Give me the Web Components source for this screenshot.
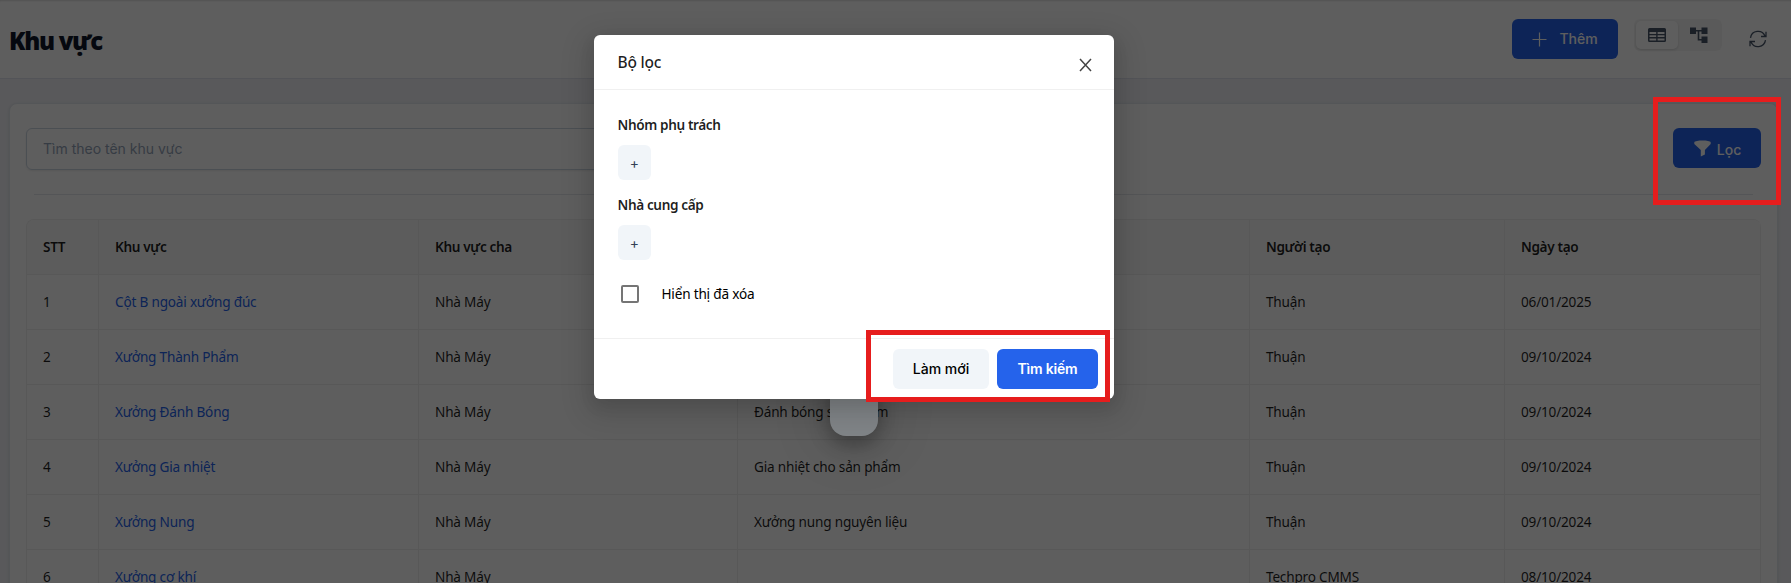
<!DOCTYPE html>
<html lang="vi">
<head>
<meta charset="utf-8">
<title>Khu vực</title>
<style>
html,body{margin:0;height:583px;overflow:hidden}
body{position:relative;font:13.6px/22px "Noto Sans","Open Sans",sans-serif;color:rgba(0,0,0,.88);background:#f0f1f6}
</style>
</head>
<body>
<region-page></region-page>
<page-mask></page-mask>
<filter-dialog></filter-dialog>
<mark-box style="--x:1653px;--y:97px;--w:128px;--h:108px"></mark-box>
<mark-box style="--x:866px;--y:330px;--w:244px;--h:72px"></mark-box>
<script>
const define=(name,html,setup)=>customElements.define(name,class extends HTMLElement{
  constructor(){super();this.attachShadow({mode:'open'}).innerHTML=html;}
  connectedCallback(){if(setup)setup(this,this.shadowRoot);}
});

define('ui-button',`<style>
:host{display:flex;box-sizing:border-box;height:40px;align-items:center;justify-content:center;border-radius:6px;background:#2563eb;color:#fff;font:500 14px/20px Inter,sans-serif;white-space:nowrap}
:host([plain]){background:#f1f5f9;color:#000}
:host([small]){width:33px;height:35px;font:400 14px/20px Inter,sans-serif;color:#334155;background:#f1f5f9}
</style><slot></slot>`);

define('page-header',`<style>
:host{display:flex;box-sizing:border-box;height:79px;padding:19px 23px 0 9px;background:#fff;border-bottom:1px solid #e2e4ee;align-items:flex-start;box-shadow:inset 0 2px 2px -1px #ddd}
h1{margin:8px auto 0 0;font:900 24px/28px "Noto Sans",sans-serif;letter-spacing:-1.3px;color:#0f172a}
ui-button{width:106px}
.plus{margin-right:12px}
.seg{display:flex;box-sizing:border-box;width:88px;height:32px;margin-left:16px;padding:2px;border-radius:6px;background:#f5f5f5}
.seg div{display:flex;width:42px;height:28px;align-items:center;justify-content:center;color:#475569}
.seg .on{background:#fff;border-radius:5px;box-shadow:0 1px 3px rgba(0,0,0,.14)}
.refresh{margin:10px 0 0 26px;width:20px;height:20px}
svg{display:block}
</style>
<h1>Khu vực</h1>
<ui-button><svg class="plus" width="15" height="15" viewBox="0 0 15 15" stroke="currentColor" stroke-width="1.2"><path d="M7.5 .5v14M.5 7.5h14"/></svg>Thêm</ui-button>
<div class="seg"><div class="on"><svg width="18" height="14" viewBox="0 0 18 14"><path fill="currentColor" fill-rule="evenodd" d="M1.5 0h15Q18 0 18 1.5v11q0 1.500-1.500 1.500h-15Q0 14 0 12.500v-11Q0 0 1.500 0ZM1.500 4v1.900h6.700V4Zm8.100 0v1.900h6.900V4ZM1.500 7.200v1.900h6.700V7.200Zm8.100 0v1.900h6.900V7.200ZM1.500 10.400v2.100h6.700v-2.100Zm8.100 0v2.100h6.900v-2.100Z"/></svg></div>
<div class="tree"><svg width="18" height="16" viewBox="0 0 18 16"><path fill="currentColor" d="M0 .5h6v6.500H0zM11.500 .5h6V7h-6zM11.500 9.500h6V16h-6z"/><path fill="none" stroke="currentColor" stroke-width="1.600" d="M5 3.700h7M8.500 3.700v9.100H12"/></svg></div></div>
<svg class="refresh" viewBox="0 0 20 20" fill="none" stroke="#475569" stroke-width="1.300"><path d="M2.500 8.800A7.600 7.600 0 0 1 17 7M17.500 11.200A7.600 7.600 0 0 1 3 13M18 2.800V7.500h-5M2 17.200v-4.700h5"/></svg>`);

define('filter-bar',`<style>
:host{display:flex;justify-content:space-between;padding:24px 0;margin:0 8px;border-bottom:1px solid #e5e7eb}
.in{box-sizing:border-box;width:700px;height:42px;margin-left:-8px;border:1px solid #cbd5e1;border-radius:6px;padding:0 16px;font:14px/40px Inter,sans-serif;color:#94a3b8;box-shadow:0 1px 2px rgba(0,0,0,.08)}
ui-button{width:88px;margin-right:-8px}
svg{margin:0 6px 0 1px}
span{padding-top:4px}
</style>
<div class="in">Tìm theo tên khu vực</div>
<ui-button><svg width="17" height="17" viewBox="0 0 17 17" fill="currentColor"><path d="M.3 2.200C1 0 16 0 16.700 2.200V4L10.900 10V14.500L6.800 16.500V10L.3 4Z"/></svg><span>Lọc</span></ui-button>`);

define('region-table',`<style>
:host{display:block;box-sizing:border-box;margin-top:24px;border:1px solid #eee;border-right:0;border-bottom:0;border-radius:8px 8px 0 0;overflow:hidden}
.row{display:grid;grid-template-columns:72px 320px 319px 512px 255px 256px}
.row div{box-sizing:border-box;height:55px;padding:16px;border-right:1px solid #eee;border-bottom:1px solid #eee;white-space:nowrap;letter-spacing:-.2px}
.head{background:#fafafa}
.row.head div{font-weight:600;letter-spacing:-.35px}
.row .link{color:#2563eb}
</style>`,(el,root)=>{
  const add=(cells,head)=>{
    const r=document.createElement('div');r.className=head?'row head':'row';
    cells.forEach((t,i)=>{const c=document.createElement('div');c.textContent=t;if(i===1&&!head)c.className='link';r.append(c);});
    root.append(r);
  };
  add(['STT','Khu vực','Khu vực cha','Mô tả','Người tạo','Ngày tạo'],true);
  [['1','Cột B ngoài xưởng đúc','Nhà Máy','','Thuận','06/01/2025'],
   ['2','Xưởng Thành Phẩm','Nhà Máy','','Thuận','09/10/2024'],
   ['3','Xưởng Đánh Bóng','Nhà Máy','Đánh bóng sản phẩm','Thuận','09/10/2024'],
   ['4','Xưởng Gia nhiệt','Nhà Máy','Gia nhiệt cho sản phẩm','Thuận','09/10/2024'],
   ['5','Xưởng Nung','Nhà Máy','Xưởng nung nguyên liệu','Thuận','09/10/2024'],
   ['6','Xưởng cơ khí','Nhà Máy','','Techpro CMMS','08/10/2024']].forEach(r=>add(r));
});

define('region-page',`<style>
:host{display:block;height:583px;overflow:hidden}
.card{box-sizing:border-box;margin:24px 13px 0 9px;padding:0 16px;height:520px;background:#fff;border:1px solid #e5e8ef;border-radius:8px;box-shadow:0 1px 3px rgba(0,0,0,.1)}
</style><page-header></page-header><div class="card"><filter-bar></filter-bar><region-table></region-table></div>`);

define('page-mask',`<style>
:host{position:absolute;inset:0;background:rgba(0,0,0,.63);overflow:hidden}
.load{position:absolute;left:830px;top:376px;width:48px;height:60px;border-radius:0 0 16px 16px;background:#808487;box-shadow:0 8px 20px rgba(0,0,0,.3),0 4px 60px rgba(0,0,0,.2)}
</style><div class="load"></div>`);

define('filter-dialog',`<style>
:host{position:absolute;left:594px;top:35px;width:520px;height:364px;background:#fff;border-radius:6px;display:flex;flex-direction:column;box-shadow:0 6px 16px rgba(0,0,0,.08),0 9px 28px 8px rgba(0,0,0,.12)}
header{display:flex;box-sizing:border-box;height:55px;border-bottom:1px solid #f0f0f0;padding:16px 22px 0 23.500px;justify-content:space-between;font-size:15.500px;font-weight:500;letter-spacing:-.2px}
header svg{margin-top:7px}
main{flex:1;padding:24px 24px 0;display:flex;flex-direction:column;align-items:flex-start}
label{font-weight:600;line-height:22px;letter-spacing:-.38px;margin:0 0 9px -.5px}
ui-button[small]{margin-bottom:14px}
.check{display:flex;align-items:center;gap:22.500px;margin:9px 0 0 3px;letter-spacing:-.2px;color:#000}
.check i{box-sizing:border-box;width:18px;height:18px;border:2px solid #757575;border-radius:2px}
footer{display:flex;box-sizing:border-box;height:61px;border-top:1px solid #f0f0f0;padding:10px 16px;justify-content:flex-end;gap:8px}
.reset{width:96px}.go{width:101px;font-weight:600;letter-spacing:-.2px}
</style>
<header><span>Bộ lọc</span><svg width="13" height="14" viewBox="0 0 13 14" fill="none" stroke="#444" stroke-width="1.500"><path d="M1 1l11 12M12 1L1 13"/></svg></header>
<main><label>Nhóm phụ trách</label><ui-button small>+</ui-button><label>Nhà cung cấp</label><ui-button small>+</ui-button><div class="check"><i></i><span>Hiển thị đã xóa</span></div></main>
<footer><ui-button plain class="reset">Làm mới</ui-button><ui-button class="go">Tìm kiếm</ui-button></footer>`);

define('mark-box',`<style>:host{position:absolute;box-sizing:border-box;left:var(--x);top:var(--y);width:var(--w);height:var(--h);border:5px solid #e61d1d}</style>`);
</script>
</body>
</html>
